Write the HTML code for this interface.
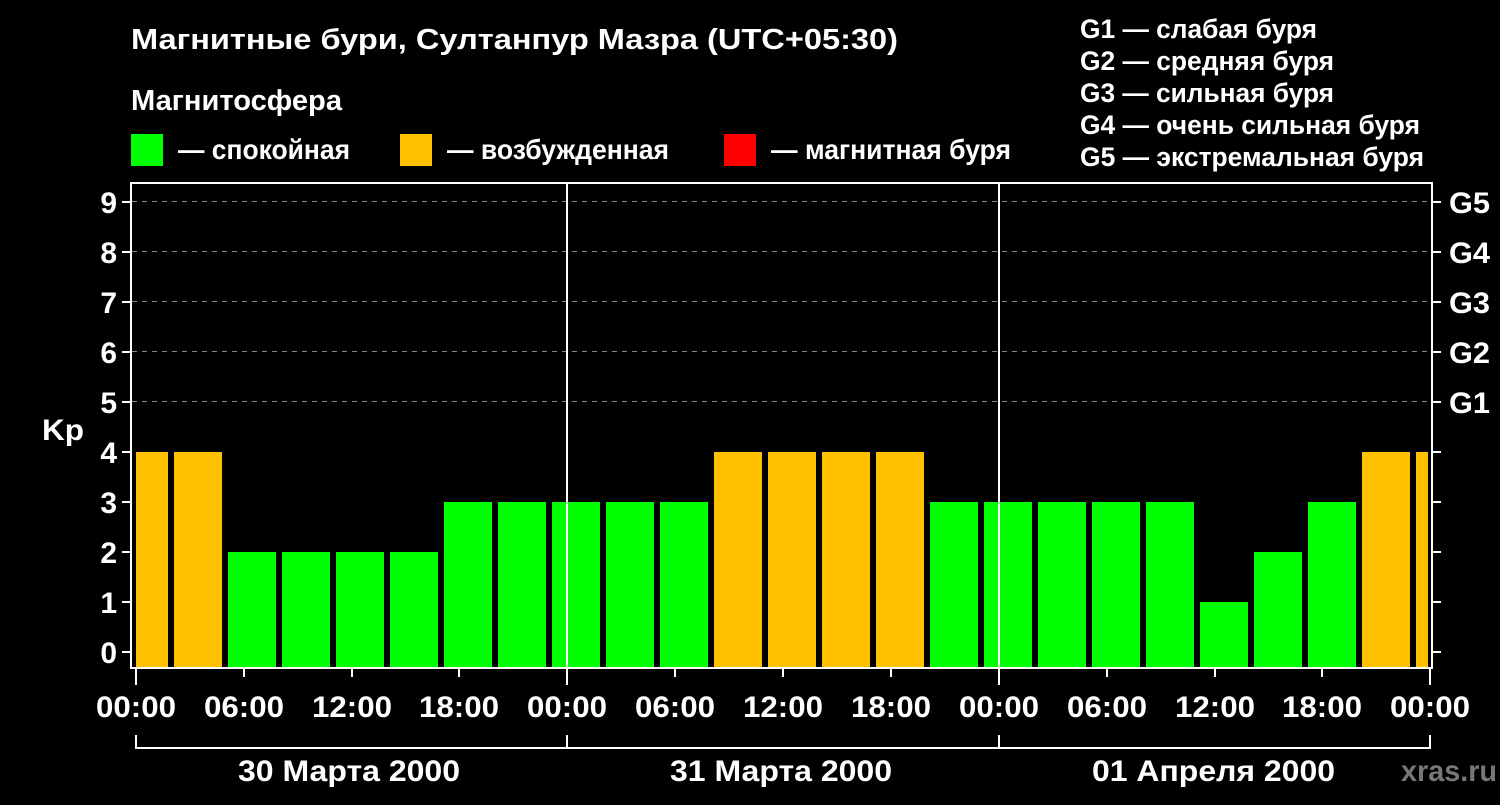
<!DOCTYPE html>
<html><head><meta charset="utf-8"><style>
body{margin:0;background:#000;width:1500px;height:800px;overflow:hidden}
text{font-family:"Liberation Sans",sans-serif;font-weight:bold;fill:#fff}
</style></head><body>
<svg width="1500" height="800" xmlns="http://www.w3.org/2000/svg">
<rect width="1500" height="800" fill="#000"/>
<text x="131" y="49" font-size="29" textLength="767" lengthAdjust="spacingAndGlyphs">Магнитные бури, Султанпур Мазра (UTC+05:30)</text>
<text x="131" y="110" font-size="29" textLength="211" lengthAdjust="spacingAndGlyphs">Магнитосфера</text>
<rect x="131" y="134" width="32" height="32" fill="#00ff00"/>
<text x="178" y="159" font-size="28" textLength="172" lengthAdjust="spacingAndGlyphs">— спокойная</text>
<rect x="400" y="134" width="32" height="32" fill="#ffc000"/>
<text x="447" y="159" font-size="28" textLength="222" lengthAdjust="spacingAndGlyphs">— возбужденная</text>
<rect x="724" y="134" width="32" height="32" fill="#ff0000"/>
<text x="771" y="159" font-size="28" textLength="240" lengthAdjust="spacingAndGlyphs">— магнитная буря</text>
<g font-size="27">
<text x="1080" y="38" textLength="237" lengthAdjust="spacingAndGlyphs">G1 — слабая буря</text>
<text x="1080" y="70" textLength="254" lengthAdjust="spacingAndGlyphs">G2 — средняя буря</text>
<text x="1080" y="102" textLength="254" lengthAdjust="spacingAndGlyphs">G3 — сильная буря</text>
<text x="1080" y="134" textLength="340" lengthAdjust="spacingAndGlyphs">G4 — очень сильная буря</text>
<text x="1080" y="166" textLength="344" lengthAdjust="spacingAndGlyphs">G5 — экстремальная буря</text>
</g>
<g stroke="#888" stroke-width="1" stroke-dasharray="5,5">
<line x1="132" x2="1432" y1="201.5" y2="201.5"/><line x1="132" x2="1432" y1="251.5" y2="251.5"/>
<line x1="132" x2="1432" y1="301.5" y2="301.5"/><line x1="132" x2="1432" y1="351.5" y2="351.5"/>
<line x1="132" x2="1432" y1="401.5" y2="401.5"/>
</g>
<g fill="#ffc000">
<rect x="136" y="452" width="32" height="216"/><rect x="174" y="452" width="48" height="216"/>
<rect x="714" y="452" width="48" height="216"/><rect x="768" y="452" width="48" height="216"/>
<rect x="822" y="452" width="48" height="216"/><rect x="876" y="452" width="48" height="216"/>
<rect x="1362" y="452" width="48" height="216"/><rect x="1416" y="452" width="12" height="216"/>
</g>
<g fill="#00ff00">
<rect x="228" y="552" width="48" height="116"/><rect x="282" y="552" width="48" height="116"/>
<rect x="336" y="552" width="48" height="116"/><rect x="390" y="552" width="48" height="116"/>
<rect x="444" y="502" width="48" height="166"/><rect x="498" y="502" width="48" height="166"/>
<rect x="552" y="502" width="48" height="166"/><rect x="606" y="502" width="48" height="166"/>
<rect x="660" y="502" width="48" height="166"/>
<rect x="930" y="502" width="48" height="166"/><rect x="984" y="502" width="48" height="166"/>
<rect x="1038" y="502" width="48" height="166"/><rect x="1092" y="502" width="48" height="166"/>
<rect x="1146" y="502" width="48" height="166"/>
<rect x="1200" y="602" width="48" height="66"/><rect x="1254" y="552" width="48" height="116"/>
<rect x="1308" y="502" width="48" height="166"/>
</g>
<g stroke="#fff" stroke-width="2" fill="none">
<line x1="567" x2="567" y1="183" y2="668"/><line x1="999" x2="999" y1="183" y2="668"/>
<rect x="131" y="183" width="1301" height="485"/>
<path d="M122 202H131M122 252H131M122 302H131M122 352H131M122 402H131M122 452H131M122 502H131M122 552H131M122 602H131M122 652H131"/>
<path d="M1432 202H1441M1432 252H1441M1432 302H1441M1432 352H1441M1432 402H1441M1432 452H1441M1432 502H1441M1432 552H1441M1432 602H1441M1432 652H1441"/>
<path d="M136 668V685M567 668V685M999 668V685M1430 668V685M244 668V677M352 668V677M459 668V677M675 668V677M783 668V677M891 668V677M1107 668V677M1215 668V677M1322 668V677"/>
<path d="M136 735V748H1430V735M567 735V748M999 735V748"/>
</g>
<g font-size="30" text-anchor="end">
<text x="117" y="213">9</text><text x="117" y="263">8</text><text x="117" y="313">7</text>
<text x="117" y="363">6</text><text x="117" y="413">5</text><text x="117" y="463">4</text>
<text x="117" y="513">3</text><text x="117" y="563">2</text><text x="117" y="613">1</text><text x="117" y="663">0</text>
</g>
<text x="42" y="440" font-size="30" textLength="42" lengthAdjust="spacingAndGlyphs">Kp</text>
<g font-size="30">
<text x="1449" y="213" textLength="41" lengthAdjust="spacingAndGlyphs">G5</text><text x="1449" y="263" textLength="41" lengthAdjust="spacingAndGlyphs">G4</text><text x="1449" y="313" textLength="41" lengthAdjust="spacingAndGlyphs">G3</text>
<text x="1449" y="363" textLength="41" lengthAdjust="spacingAndGlyphs">G2</text><text x="1449" y="413" textLength="41" lengthAdjust="spacingAndGlyphs">G1</text>
</g>
<g font-size="30">
<text x="96" y="717" textLength="80" lengthAdjust="spacingAndGlyphs">00:00</text>
<text x="204" y="717" textLength="80" lengthAdjust="spacingAndGlyphs">06:00</text>
<text x="312" y="717" textLength="80" lengthAdjust="spacingAndGlyphs">12:00</text>
<text x="419" y="717" textLength="80" lengthAdjust="spacingAndGlyphs">18:00</text>
<text x="527" y="717" textLength="80" lengthAdjust="spacingAndGlyphs">00:00</text>
<text x="635" y="717" textLength="80" lengthAdjust="spacingAndGlyphs">06:00</text>
<text x="743" y="717" textLength="80" lengthAdjust="spacingAndGlyphs">12:00</text>
<text x="851" y="717" textLength="80" lengthAdjust="spacingAndGlyphs">18:00</text>
<text x="959" y="717" textLength="80" lengthAdjust="spacingAndGlyphs">00:00</text>
<text x="1067" y="717" textLength="80" lengthAdjust="spacingAndGlyphs">06:00</text>
<text x="1175" y="717" textLength="80" lengthAdjust="spacingAndGlyphs">12:00</text>
<text x="1282" y="717" textLength="80" lengthAdjust="spacingAndGlyphs">18:00</text>
<text x="1390" y="717" textLength="80" lengthAdjust="spacingAndGlyphs">00:00</text>
<text x="238" y="781" textLength="222" lengthAdjust="spacingAndGlyphs">30 Марта 2000</text>
<text x="670" y="781" textLength="222" lengthAdjust="spacingAndGlyphs">31 Марта 2000</text>
<text x="1092" y="781" textLength="243" lengthAdjust="spacingAndGlyphs">01 Апреля 2000</text>
<text x="1401" y="781" textLength="96" lengthAdjust="spacingAndGlyphs" style="fill:#777">xras.ru</text>
</g>
</svg>
</body></html>
